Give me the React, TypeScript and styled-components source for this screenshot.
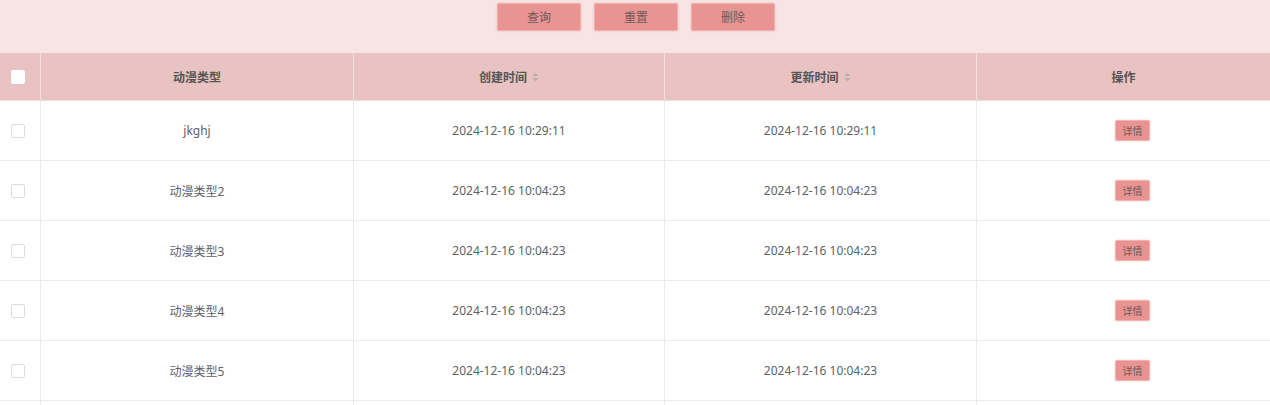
import React from 'react'
import styled, { createGlobalStyle } from 'styled-components'

const GlobalStyle = createGlobalStyle`
  body {
    margin: 0;
    background: #ffffff;
    font-family: 'Noto Sans', 'Noto Sans CJK SC', sans-serif;
    overflow: hidden;
  }
`

const rows = [
  { id: '1', name: 'jkghj', created: '2024-12-16 10:29:11', updated: '2024-12-16 10:29:11' },
  { id: '2', name: '动漫类型2', created: '2024-12-16 10:04:23', updated: '2024-12-16 10:04:23' },
  { id: '3', name: '动漫类型3', created: '2024-12-16 10:04:23', updated: '2024-12-16 10:04:23' },
  { id: '4', name: '动漫类型4', created: '2024-12-16 10:04:23', updated: '2024-12-16 10:04:23' },
  { id: '5', name: '动漫类型5', created: '2024-12-16 10:04:23', updated: '2024-12-16 10:04:23' },
]

const SortIcon = () => (
  <svg width="7" height="10" viewBox="0 0 7 10">
    <path d="M3.5 0.5 L6.5 4 H0.5 Z" fill="#b8b0b0" />
    <path d="M3.5 9.5 L6.5 6 H0.5 Z" fill="#b8b0b0" />
  </svg>
)

export default function App() {
  return (
    <Page>
      <GlobalStyle />
      <Toolbar>
        <ActionButton>查询</ActionButton>
        <ActionButton>重置</ActionButton>
        <ActionButton>删除</ActionButton>
      </Toolbar>

      <Table>
        <HeadRow>
          <HeadCell>
            <CheckBox head />
          </HeadCell>
          <HeadCell>动漫类型</HeadCell>
          <HeadCell>
            创建时间 <SortIcon />
          </HeadCell>
          <HeadCell>
            更新时间 <SortIcon />
          </HeadCell>
          <HeadCell>操作</HeadCell>
        </HeadRow>

        {rows.map(r => (
          <BodyRow key={r.id}>
            <Cell>
              <CheckBox />
            </Cell>
            <Cell>{r.name}</Cell>
            <Cell>{r.created}</Cell>
            <Cell>{r.updated}</Cell>
            <ActionCell>
              <DetailButton>详情</DetailButton>
            </ActionCell>
          </BodyRow>
        ))}
        {/* 次の行（画面外へ続く） */}
        <BodyRow>
          <Cell />
          <Cell />
          <Cell />
          <Cell />
          <ActionCell />
        </BodyRow>
      </Table>
    </Page>
  )
}

const Page = styled.div`
  width: 1270px;
  height: 405px;
  overflow: hidden;
`

const Toolbar = styled.div`
  display: flex;
  justify-content: center;
  gap: 13px;
  height: 53px;
  padding: 3px 0 0 2px;
  box-sizing: border-box;
  background: #f7e4e3;
`

const ActionButton = styled.button`
  width: 84px;
  height: 28px;
  padding: 0;
  border: 1px solid #f0b0b0;
  border-radius: 2px;
  background: #e99393;
  color: #6e5a5a;
  font-family: inherit;
  font-size: 12px;
  box-shadow: 0 0 2px rgba(230, 140, 140, 0.6);
  cursor: pointer;
`

const Table = styled.div`
  display: flex;
  flex-direction: column;
`

const HeadRow = styled.div`
  display: grid;
  grid-template-columns: 41px 313px 311px 312px 1fr;
  height: 47px;
  background: #e9c3c1;
  border-bottom: 1px solid #f3dedd;
`

const BodyRow = styled.div`
  display: grid;
  grid-template-columns: 41px 313px 311px 312px 1fr;
  height: 60px;
  flex-shrink: 0;
  border-bottom: 1px solid #ebebeb;
  box-sizing: border-box;
`

const HeadCell = styled.div`
  display: flex;
  align-items: center;
  justify-content: center;
  gap: 5px;
  border-right: 1px solid #f3dedd;
  color: #555;
  font-size: 12px;
  font-weight: bold;

  &:last-child {
    border-right: none;
  }
`

const Cell = styled.div`
  display: flex;
  align-items: center;
  justify-content: center;
  border-right: 1px solid #ebebeb;
  color: #606266;
  font-size: 12px;

  &:last-child {
    border-right: none;
  }
`

const ActionCell = styled(Cell)`
  padding-left: 18px;
`

const CheckBox = styled.span<{ head?: boolean }>`
  display: block;
  width: 12px;
  height: 12px;
  margin-left: -4px;
  border: 1px solid ${p => (p.head ? '#ffffff' : '#dcdcdc')};
  border-radius: 2px;
  background: #ffffff;
`

const DetailButton = styled.button`
  width: 35px;
  height: 21px;
  padding: 0;
  border: 1px solid #f2b3b3;
  border-radius: 2px;
  background: #e99393;
  color: #6e5a5a;
  font-family: inherit;
  font-size: 10px;
  box-shadow: 0 0 2px rgba(230, 140, 140, 0.5);
  cursor: pointer;
`
